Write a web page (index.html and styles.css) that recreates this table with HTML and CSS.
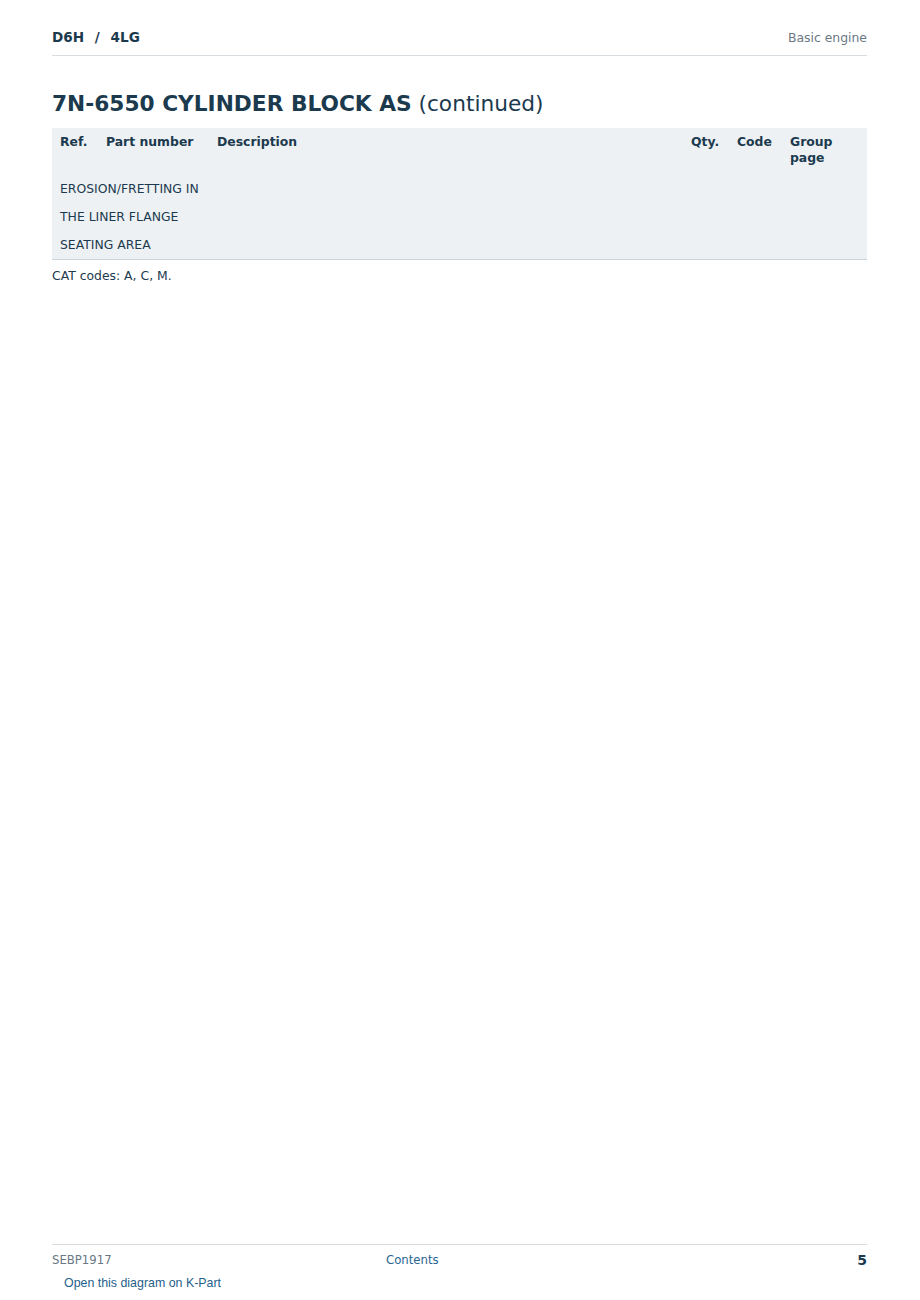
FILE: index.html
```html
<!DOCTYPE html>
<html lang="en">
<head>
<meta charset="utf-8">
<title>D6H / 4LG - Basic engine</title>
<link rel="stylesheet" href="styles.css">
</head>
<body>
<div class="page">
  <header class="top">
    <div class="crumb">D6H <span class="sep">/</span> 4LG</div>
    <div class="section">Basic engine</div>
  </header>

  <h1 class="title"><strong>7N-6550 CYLINDER BLOCK AS</strong> <span class="cont">(continued)</span></h1>

  <table class="parts">
    <colgroup>
      <col class="c-ref"><col class="c-pn"><col class="c-desc"><col class="c-qty"><col class="c-code"><col class="c-grp">
    </colgroup>
    <thead>
      <tr>
        <th>Ref.</th><th>Part number</th><th>Description</th><th>Qty.</th><th>Code</th><th>Group page</th>
      </tr>
    </thead>
    <tbody>
      <tr><td colspan="6">EROSION/FRETTING IN</td></tr>
      <tr><td colspan="6">THE LINER FLANGE</td></tr>
      <tr><td colspan="6">SEATING AREA</td></tr>
    </tbody>
  </table>
  <p class="codes">CAT codes: A, C, M.</p>

  <footer class="bottom">
    <div class="foot-row">
      <span class="doc">SEBP1917</span>
      <a class="contents" href="#">Contents</a>
      <span class="pg">5</span>
    </div>
    <a class="kpart" href="#">Open this diagram on K-Part</a>
  </footer>
</div>
</body>
</html>
```

FILE: styles.css
```css
html, body {
  margin: 0;
  padding: 0;
  background: #ffffff;
}
body {
  font-family: "DejaVu Sans", sans-serif;
  color: #1c3a4e;
}
.page {
  box-sizing: border-box;
  min-height: 1300px;
  padding: 0 53px 0 52px;
  display: flex;
  flex-direction: column;
}
.top {
  display: flex;
  justify-content: space-between;
  align-items: baseline;
  padding-top: 29px;
  padding-bottom: 9px;
  border-bottom: 1px solid #d8dde2;
}
.crumb {
  font-weight: bold;
  font-size: 13.6px;
  line-height: 17px;
}
.sep {
  margin: 0 6px;
}
.section {
  font-size: 12.4px;
  color: #6a7884;
  line-height: 17px;
}
.title {
  margin: 33px 0 0;
  font-size: 21.7px;
  line-height: 30px;
  font-weight: normal;
}
.title strong {
  font-weight: bold;
}
.parts {
  margin-top: 9px;
  width: 100%;
  border-collapse: collapse;
  background: #edf1f4;
  border-bottom: 1px solid #cdd5dc;
  font-size: 12.4px;
}
.c-ref { width: 46px; }
.c-pn { width: 111px; }
.c-qty { width: 46px; }
.c-code { width: 53px; }
.c-grp { width: 85px; }
.parts th {
  text-align: left;
  vertical-align: top;
  font-size: 12.4px;
  line-height: 16px;
  font-weight: bold;
  padding: 6px 8px 9px;
}
.parts td {
  padding: 6px 8px;
  line-height: 16px;
}
.codes {
  margin: 8px 0 0;
  font-size: 12.4px;
  line-height: 16px;
}
.bottom {
  margin-top: auto;
  border-top: 1px solid #d8dde2;
  padding-bottom: 9px;
}
.foot-row {
  display: grid;
  grid-template-columns: 334px 1fr auto;
  align-items: center;
  padding-top: 7px;
  line-height: 16px;
}
.doc {
  font-size: 11.7px;
  color: #6a7884;
}
.contents {
  font-size: 11.7px;
  color: #2a6593;
  text-decoration: none;
}
.pg {
  font-size: 14px;
  font-weight: bold;
}
.kpart {
  display: inline-block;
  margin: 7px 0 0 12px;
  font-family: "Liberation Sans", Arial, sans-serif;
  font-size: 12.4px;
  line-height: 16px;
  color: #1f5f8b;
  text-decoration: none;
}
```
